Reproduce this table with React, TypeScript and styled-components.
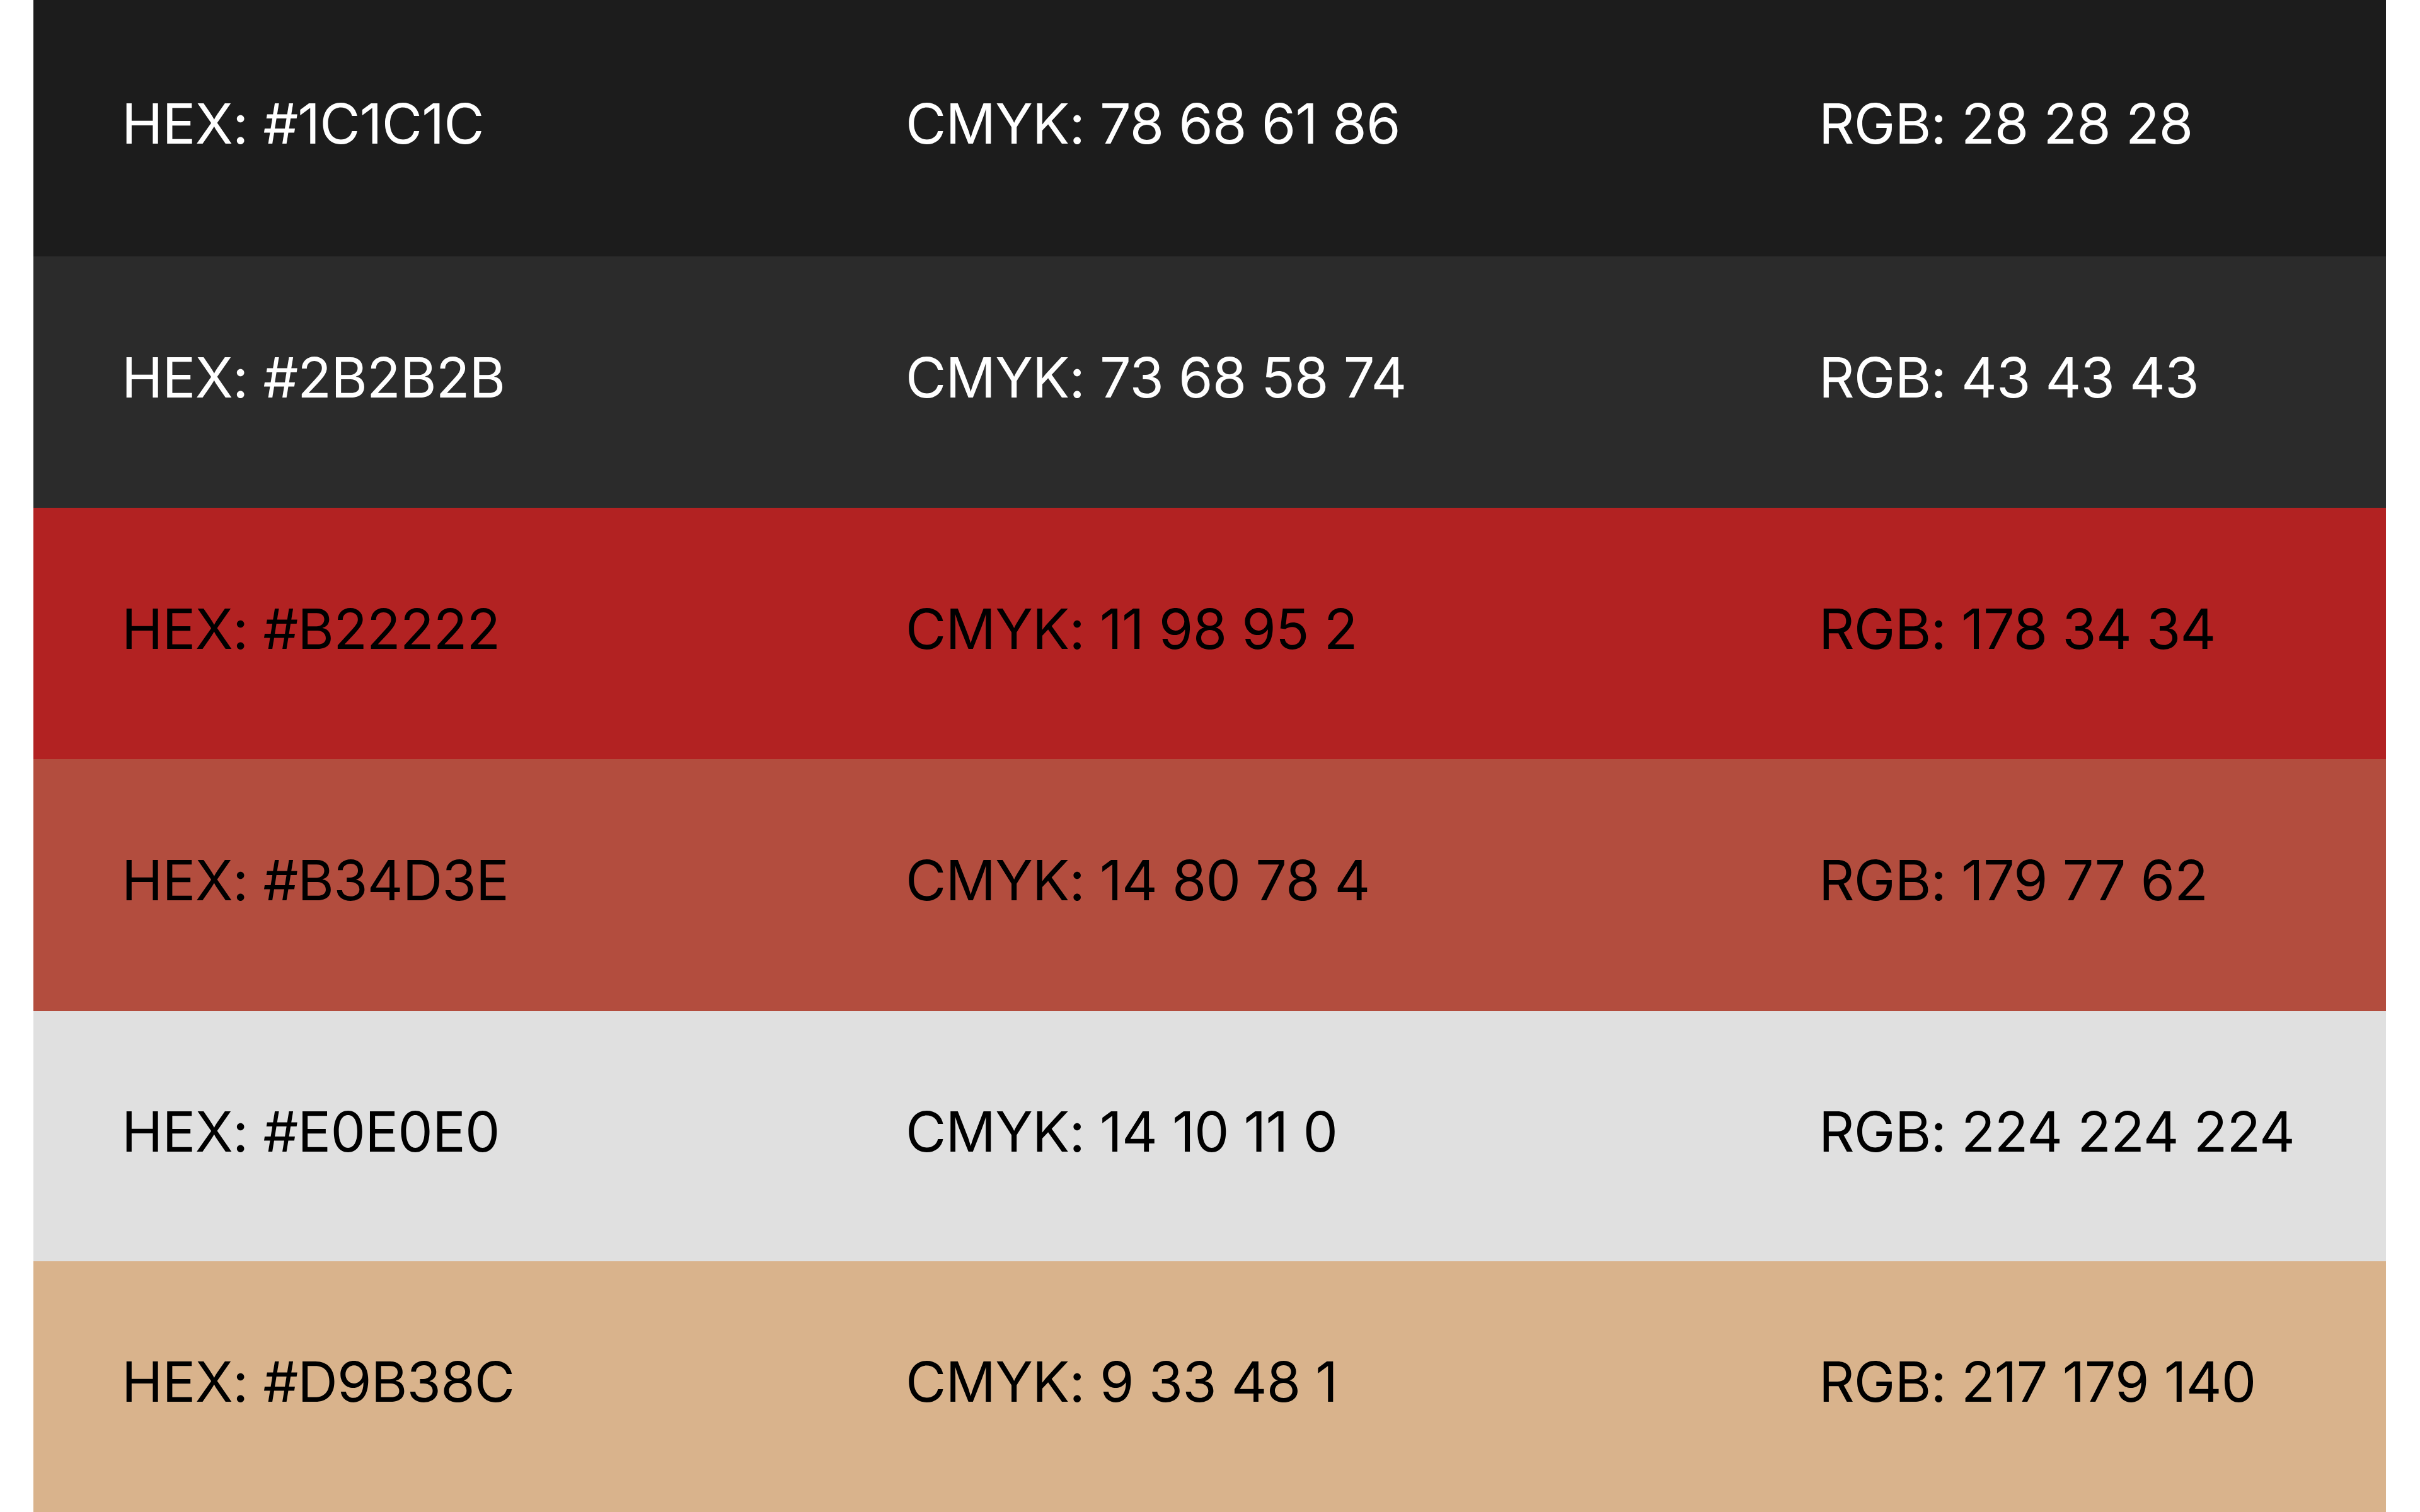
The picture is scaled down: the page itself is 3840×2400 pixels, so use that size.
import React from "react";
import styled, { createGlobalStyle } from "styled-components";

const GlobalStyle = createGlobalStyle`
  html, body {
    margin: 0;
    padding: 0;
    background: #ffffff;
  }
  body {
    font-family: Inter, "Liberation Sans", sans-serif;
  }
`;

const Page = styled.div`
  width: 3840px;
  height: 2400px;
  padding: 0 54px 0 53px;
  box-sizing: border-box;
`;

const Palette = styled.div`
  display: grid;
  grid-template-rows: 407px 399px 399px 400px 397px 398px;
  height: 100%;
`;

const Swatch = styled.div<{ $bg: string; $dark: boolean }>`
  display: grid;
  grid-template-columns: 1244px 1449px 1fr;
  align-items: center;
  padding-bottom: 16px;
  box-sizing: border-box;
  background: ${(p) => p.$bg};
  color: ${(p) => (p.$dark ? "#ffffff" : "#000000")};
`;

const Value = styled.div`
  padding-left: 140px;
  font-size: 88px;
  font-weight: 400;
  letter-spacing: -0.8px;
  white-space: nowrap;
`;

interface Colour {
  hex: string;
  cmyk: string;
  rgb: string;
  dark: boolean;
}

const colours: Colour[] = [
  { hex: "#1C1C1C", cmyk: "78 68 61 86", rgb: "28 28 28", dark: true },
  { hex: "#2B2B2B", cmyk: "73 68 58 74", rgb: "43 43 43", dark: true },
  { hex: "#B22222", cmyk: "11 98 95 2", rgb: "178 34 34", dark: false },
  { hex: "#B34D3E", cmyk: "14 80 78 4", rgb: "179 77 62", dark: false },
  { hex: "#E0E0E0", cmyk: "14 10 11 0", rgb: "224 224 224", dark: false },
  { hex: "#D9B38C", cmyk: "9 33 48 1", rgb: "217 179 140", dark: false },
];

const App: React.FC = () => {
  return (
    <>
      <GlobalStyle />
      <Page>
        <Palette>
          {colours.map((c) => (
            <Swatch key={c.hex} $bg={c.hex} $dark={c.dark}>
              <Value>HEX: {c.hex}</Value>
              <Value>CMYK: {c.cmyk}</Value>
              <Value>RGB: {c.rgb}</Value>
            </Swatch>
          ))}
        </Palette>
      </Page>
    </>
  );
};

export default App;
